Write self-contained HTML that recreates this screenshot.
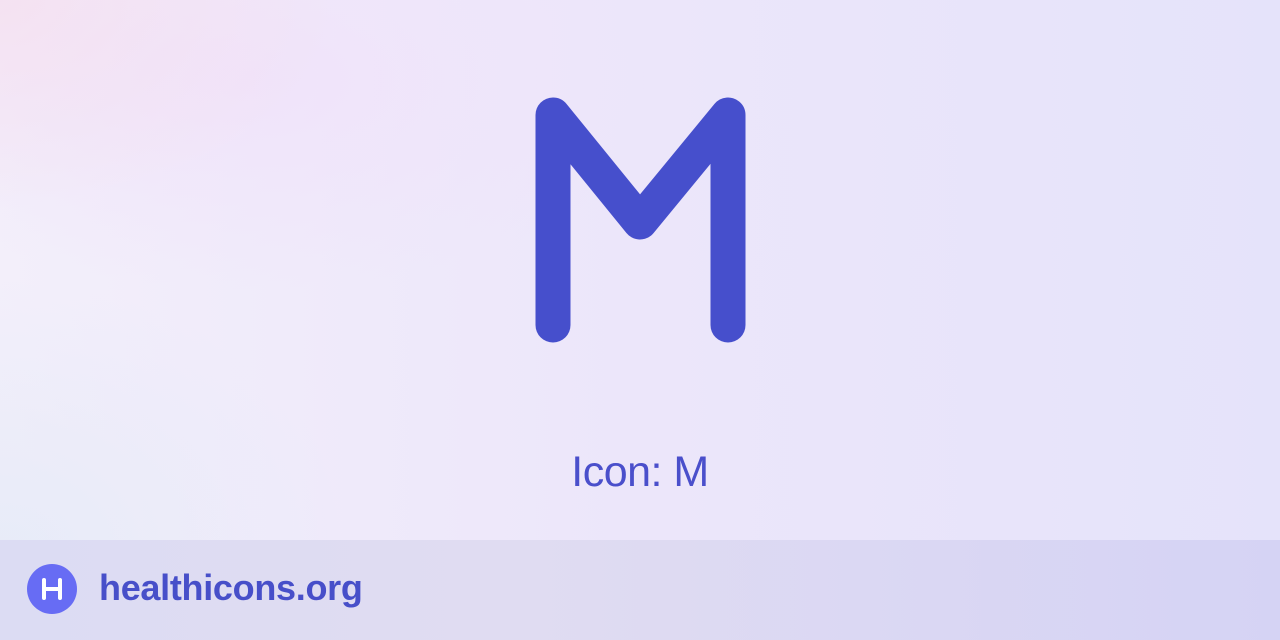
<!DOCTYPE html>
<html><head><meta charset="utf-8"><style>
html,body{margin:0;padding:0}
body{width:1280px;height:640px;position:relative;overflow:hidden;font-family:"Liberation Sans",sans-serif;
background:
radial-gradient(ellipse 500px 300px at 0px 0px, rgba(246,220,236,0.6), rgba(246,220,236,0) 70%),
radial-gradient(ellipse 600px 300px at 250px 80px, rgba(240,224,250,0.7), rgba(240,224,250,0) 70%),
radial-gradient(ellipse 500px 400px at 0px 560px, rgba(228,234,248,0.8), rgba(228,234,248,0) 70%),
linear-gradient(90deg,#f3effa 0%,#ece6fa 50%,#e5e3fa 100%);}
.bar{position:absolute;left:0;top:540px;width:1280px;height:100px;background:linear-gradient(90deg,#dcdcf3,#e0dcf2 40%,#d5d3f4);}
.t{position:absolute;left:0;width:1280px;top:448px;text-align:center;font-size:43px;color:#4a4fcb;font-weight:300;letter-spacing:-0.5px}
.logo{position:absolute;left:99px;top:567px;font-size:36px;font-weight:bold;color:#474fc9;letter-spacing:-0.3px}
</style></head><body>
<svg width="1280" height="640" style="position:absolute;left:0;top:0">
<path d="M553 325 V115 L640 222 L728 115 V325" fill="none" stroke="#464fcc" stroke-width="35" stroke-linecap="round" stroke-linejoin="round"/>
</svg>
<div class="t">Icon: M</div>
<div class="bar"></div>
<svg width="60" height="60" style="position:absolute;left:22px;top:559px">
<circle cx="30" cy="30" r="25" fill="#676cf4"/>
<path d="M22 21 V39 M38 21 V39 M22 30 H38" stroke="#fff" stroke-width="4" stroke-linecap="round" fill="none"/>
</svg>
<div class="logo">healthicons.org</div>
</body></html>
